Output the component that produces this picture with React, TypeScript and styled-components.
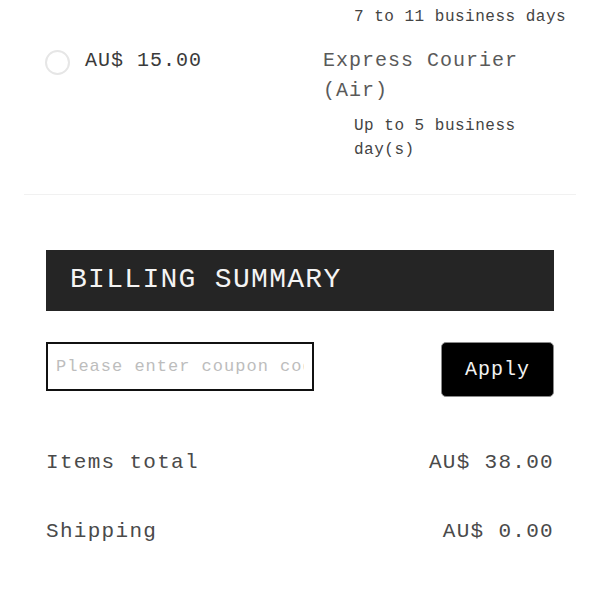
import React from "react";
import styled, { createGlobalStyle } from "styled-components";

const Global = createGlobalStyle`
  html, body { margin: 0; padding: 0; background: #fff; }
  body {
    font-family: "Liberation Mono", "Courier New", monospace;
    color: #333;
    letter-spacing: 1px;
  }
`;

const Page = styled.div`
  width: 600px;
  height: 600px;
  overflow: hidden;
  box-sizing: border-box;
  padding: 5px 24px 0;
`;

const ShippingList = styled.div`
  display: flex;
  flex-direction: column;
  padding: 0 0 32px 21px;
  border-bottom: 1px solid #f1f1f1;
`;

const OptionRow = styled.div`
  display: flex;
  align-items: flex-start;
`;

const OptionTail = styled.div`
  padding-left: 278px;
  padding-bottom: 17px;
`;

const Choice = styled.label`
  display: flex;
  align-items: center;
  gap: 15px;
  width: 278px;
  flex: none;
  height: 30px;
`;

const Radio = styled.span`
  width: 21px;
  height: 21px;
  border: 2px solid #e6e6e6;
  border-radius: 50%;
  flex: none;
  margin-top: 2px;
`;

const Price = styled.span`
  font-size: 20px;
  line-height: 30px;
  color: #3a3a3a;
`;

const Method = styled.div`
  flex: 1;
  display: flex;
  flex-direction: column;
  gap: 8px;
`;

const MethodName = styled.div`
  font-size: 20px;
  line-height: 30px;
  color: #5a5a5a;
`;

const Detail = styled.div`
  font-size: 16px;
  line-height: 24px;
  letter-spacing: 0.5px;
  color: #444;
  padding-left: 31px;
`;

const Billing = styled.section`
  padding: 55px 22px 0;
  display: flex;
  flex-direction: column;
`;

const Header = styled.h2`
  margin: 0;
  box-sizing: border-box;
  height: 61px;
  background: #252525;
  color: #f4f4f4;
  font-weight: normal;
  font-size: 28px;
  letter-spacing: 1.3px;
  display: flex;
  align-items: center;
  padding: 0 24px 3px;
`;

const CouponRow = styled.div`
  display: flex;
  justify-content: space-between;
  align-items: flex-start;
  margin-top: 31px;
`;

const CouponInput = styled.input`
  width: 268px;
  height: 49px;
  box-sizing: border-box;
  border: 2px solid #111;
  padding: 0 8px;
  font-family: "Liberation Mono", "Courier New", monospace;
  font-size: 17px;
  letter-spacing: 1px;
  color: #333;
  outline: none;
  &::placeholder { color: #bdbdbd; }
`;

const ApplyButton = styled.button`
  width: 113px;
  height: 55px;
  background: #000;
  color: #f2f2f2;
  border: 1px solid #8a8a8a;
  border-radius: 5px;
  font-family: "Liberation Mono", "Courier New", monospace;
  font-size: 20px;
  letter-spacing: 1px;
  cursor: pointer;
`;

const Totals = styled.div`
  display: flex;
  flex-direction: column;
  margin-top: 51px;
  gap: 39px;
`;

const TotalRow = styled.div`
  display: flex;
  justify-content: space-between;
  align-items: center;
  font-size: 21px;
  line-height: 30px;
  letter-spacing: 1.3px;
  color: #4a4a4a;
`;

export default function App() {
  return (
    <>
      <Global />
      <Page>
        <ShippingList>
          <OptionTail>
            <Detail>7 to 11 business days</Detail>
          </OptionTail>
          <OptionRow>
            <Choice>
              <Radio />
              <Price>AU$ 15.00</Price>
            </Choice>
            <Method>
              <MethodName>Express Courier (Air)</MethodName>
              <Detail>Up to 5 business day(s)</Detail>
            </Method>
          </OptionRow>
        </ShippingList>
        <Billing>
          <Header>BILLING SUMMARY</Header>
          <CouponRow>
            <CouponInput placeholder="Please enter coupon code" />
            <ApplyButton>Apply</ApplyButton>
          </CouponRow>
          <Totals>
            <TotalRow>
              <span>Items total</span>
              <span>AU$ 38.00</span>
            </TotalRow>
            <TotalRow>
              <span>Shipping</span>
              <span>AU$ 0.00</span>
            </TotalRow>
          </Totals>
        </Billing>
      </Page>
    </>
  );
}
